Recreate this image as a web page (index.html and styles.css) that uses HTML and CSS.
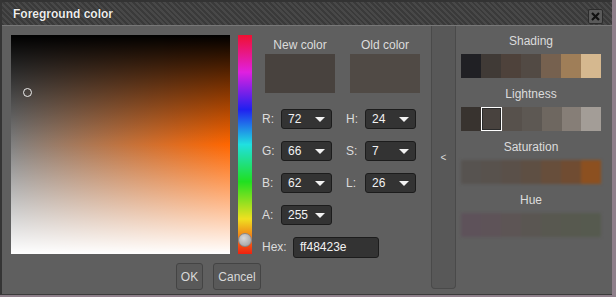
FILE: index.html
```html
<!DOCTYPE html>
<html lang="en">
<head>
    <meta charset="UTF-8">
    <title>Foreground color</title>
    <link rel="stylesheet" href="styles.css">
</head>
<body>
    <div class="dialog">
        <div class="titlebar">
            <span class="title">Foreground color</span>
            <span class="close">
                <svg width="9" height="9" viewBox="0 0 9 9"><path d="M1 1 L8 8 M8 1 L1 8" stroke="#111" stroke-width="2.2"/></svg>
            </span>
        </div>
        <div class="content">
            <div class="main">
                <div class="picker-row">
                    <div class="sv-box"><span class="sv-cursor"></span></div>
                    <div class="hue-bar"><span class="hue-handle"></span></div>
                    <div class="fields">
                        <div class="previews">
                            <div class="preview">
                                <div class="preview-label">New color</div>
                                <div class="preview-swatch" style="background:#48423e"></div>
                            </div>
                            <div class="preview">
                                <div class="preview-label">Old color</div>
                                <div class="preview-swatch" style="background:#504a45"></div>
                            </div>
                        </div>
                        <div class="inputs">
                            <label>R:</label><div class="select">72</div>
                            <span></span>
                            <label>H:</label><div class="select">24</div>
                            <label>G:</label><div class="select">66</div>
                            <span></span>
                            <label>S:</label><div class="select">7</div>
                            <label>B:</label><div class="select">62</div>
                            <span></span>
                            <label>L:</label><div class="select">26</div>
                            <label>A:</label><div class="select">255</div>
                        </div>
                        <div class="hex-row">
                            <label>Hex:</label>
                            <div class="hex-input">ff48423e</div>
                        </div>
                    </div>
                </div>
                <div class="buttons">
                    <button class="btn btn-ok">OK</button>
                    <button class="btn btn-cancel">Cancel</button>
                </div>
            </div>
            <div class="collapse">&lt;</div>
            <div class="palettes">
                <div class="group-label">Shading</div>
                <div class="swatches">
                    <span style="background:#202024"></span>
                    <span style="background:#403a36"></span>
                    <span style="background:#4e423b"></span>
                    <span style="background:#524a44"></span>
                    <span style="background:#76614f"></span>
                    <span style="background:#9f7e58"></span>
                    <span style="background:#d5b88f"></span>
                </div>
                <div class="group-label">Lightness</div>
                <div class="swatches">
                    <span style="background:#38332f"></span>
                    <span class="selected" style="background:#48423e"></span>
                    <span style="background:#57514c"></span>
                    <span style="background:#5d5853"></span>
                    <span style="background:#6e6760"></span>
                    <span style="background:#867e77"></span>
                    <span style="background:#a39d97"></span>
                </div>
                <div class="group-label">Saturation</div>
                <div class="swatches soft">
                    <span style="background:#575350"></span>
                    <span style="background:#58524d"></span>
                    <span style="background:#5a5049"></span>
                    <span style="background:#5e4f43"></span>
                    <span style="background:#674e3b"></span>
                    <span style="background:#704c32"></span>
                    <span style="background:#8c5020"></span>
                </div>
                <div class="group-label">Hue</div>
                <div class="swatches soft">
                    <span style="background:#5e525a"></span>
                    <span style="background:#5e5358"></span>
                    <span style="background:#5d5555"></span>
                    <span style="background:#5a5652"></span>
                    <span style="background:#585850"></span>
                    <span style="background:#57594f"></span>
                    <span style="background:#565a4f"></span>
                </div>
            </div>
        </div>
    </div>
</body>
</html>
```

FILE: styles.css
```css
/* General Reset */
* {
    margin: 0;
    padding: 0;
    box-sizing: border-box;
}

body {
    width: 616px;
    height: 297px;
    overflow: hidden;
    background: #8e7f8a;
    font-family: 'Liberation Sans', Arial, sans-serif;
    font-size: 12px;
    color: #dcdcdc;
}

/* Dialog window */
.dialog {
    width: 612px;
    height: 295px;
    background: #5f5f5f;
    border-left: 2px solid #353535;
    border-bottom: 1px solid #3a3a3a;
}

.titlebar {
    height: 26px;
    display: flex;
    align-items: center;
    justify-content: space-between;
    padding: 0 9px 0 11px;
    background: repeating-linear-gradient(45deg, #3a3a3a 0 2px, #484848 2px 4px);
    border-top: 2px solid #333;
    border-bottom: 1px solid #777;
}

.title {
    font-weight: bold;
    font-size: 12px;
    color: #ececec;
    text-shadow: 0 0 1px #000;
}

.close {
    width: 15px;
    height: 15px;
    margin-top: 5px;
    display: flex;
    align-items: center;
    justify-content: center;
    background: #5a5a5a;
    border: 1px solid #2c2c2c;
    border-radius: 2px;
}

.content {
    display: flex;
    height: 268px;
}

/* Left area: picker and fields */
.main {
    width: 429px;
    padding: 9px 0 0 9px;
}

.picker-row {
    display: flex;
    height: 219px;
}

.sv-box {
    position: relative;
    width: 219px;
    height: 219px;
    background:
        linear-gradient(to bottom, #000 0%, rgba(0, 0, 0, 0) 50%, rgba(255, 255, 255, 0) 50%, #fff 100%),
        linear-gradient(to right, #808080, #ff6600);
}

.sv-cursor {
    position: absolute;
    left: 12px;
    top: 53px;
    width: 9px;
    height: 9px;
    border: 1.5px solid #eee;
    border-radius: 50%;
}

.hue-bar {
    position: relative;
    width: 14px;
    height: 219px;
    margin-left: 8px;
    background: linear-gradient(to bottom, #f01030 0%, #e020e0 17%, #2020f0 34%, #20e0e0 50%, #20e020 67%, #f0e020 84%, #f02010 100%);
}

.hue-handle {
    position: absolute;
    left: 0;
    top: 198px;
    width: 14px;
    height: 14px;
    border-radius: 50%;
    background: radial-gradient(circle at 40% 35%, #d8d8d8, #9a9a9a);
    border: 1px solid #888;
}

.fields {
    margin-left: 10px;
    padding-top: 3px;
}

.previews {
    display: flex;
    gap: 15px;
    padding-left: 3px;
}

.preview-label {
    text-align: center;
    line-height: 14px;
    margin-bottom: 2px;
}

.preview-swatch {
    width: 70px;
    height: 39px;
}

.inputs {
    display: grid;
    grid-template-columns: 19px 51px 14px 19px 51px;
    grid-auto-rows: 20px;
    row-gap: 12px;
    margin-top: 16px;
    align-items: center;
}

.inputs label,
.hex-row label {
    line-height: 20px;
}

.select {
    position: relative;
    height: 20px;
    line-height: 18px;
    padding-left: 6px;
    background: #333;
    border: 1px solid #1c1c1c;
    border-radius: 3px;
    color: #f2f2f2;
}

.select::after {
    content: "";
    position: absolute;
    right: 6px;
    top: 7px;
    border-left: 5px solid transparent;
    border-right: 5px solid transparent;
    border-top: 5px solid #f2f2f2;
}

.hex-row {
    display: flex;
    margin-top: 12px;
}

.hex-row label {
    width: 31px;
}

.hex-input {
    width: 86px;
    height: 21px;
    line-height: 19px;
    padding-left: 6px;
    background: #333;
    border: 1px solid #1c1c1c;
    border-radius: 3px;
    color: #f2f2f2;
}

.buttons {
    display: flex;
    justify-content: center;
    gap: 10px;
    margin-top: 9px;
    padding-right: 5px;
}

.btn {
    height: 27px;
    background: #595959;
    border: 1px solid #444;
    border-radius: 3px;
    color: #d8d8d8;
    font-family: inherit;
    font-size: 12px;
}

.btn-ok {
    width: 27px;
}

.btn-cancel {
    width: 48px;
}

/* Collapse tab */
.collapse {
    width: 25px;
    height: 263px;
    display: flex;
    align-items: center;
    justify-content: center;
    background: #585858;
    border: 1px solid #4a4a4a;
    border-top: none;
    border-radius: 0 0 4px 4px;
    font-size: 10px;
    color: #ddd;
}

/* Palettes */
.palettes {
    width: 156px;
    padding: 5px 0 0 5px;
}

.group-label {
    width: 140px;
    text-align: center;
    line-height: 20px;
    margin-bottom: 3px;
}

.swatches {
    display: flex;
    width: 140px;
    height: 24px;
    margin-bottom: 6px;
}

.swatches span {
    flex: 1;
}

.swatches .selected {
    border: 1px solid #fff;
    box-shadow: inset 0 0 0 1px #2a2a2a;
}

.swatches.soft {
    filter: blur(1.5px);
}
```
